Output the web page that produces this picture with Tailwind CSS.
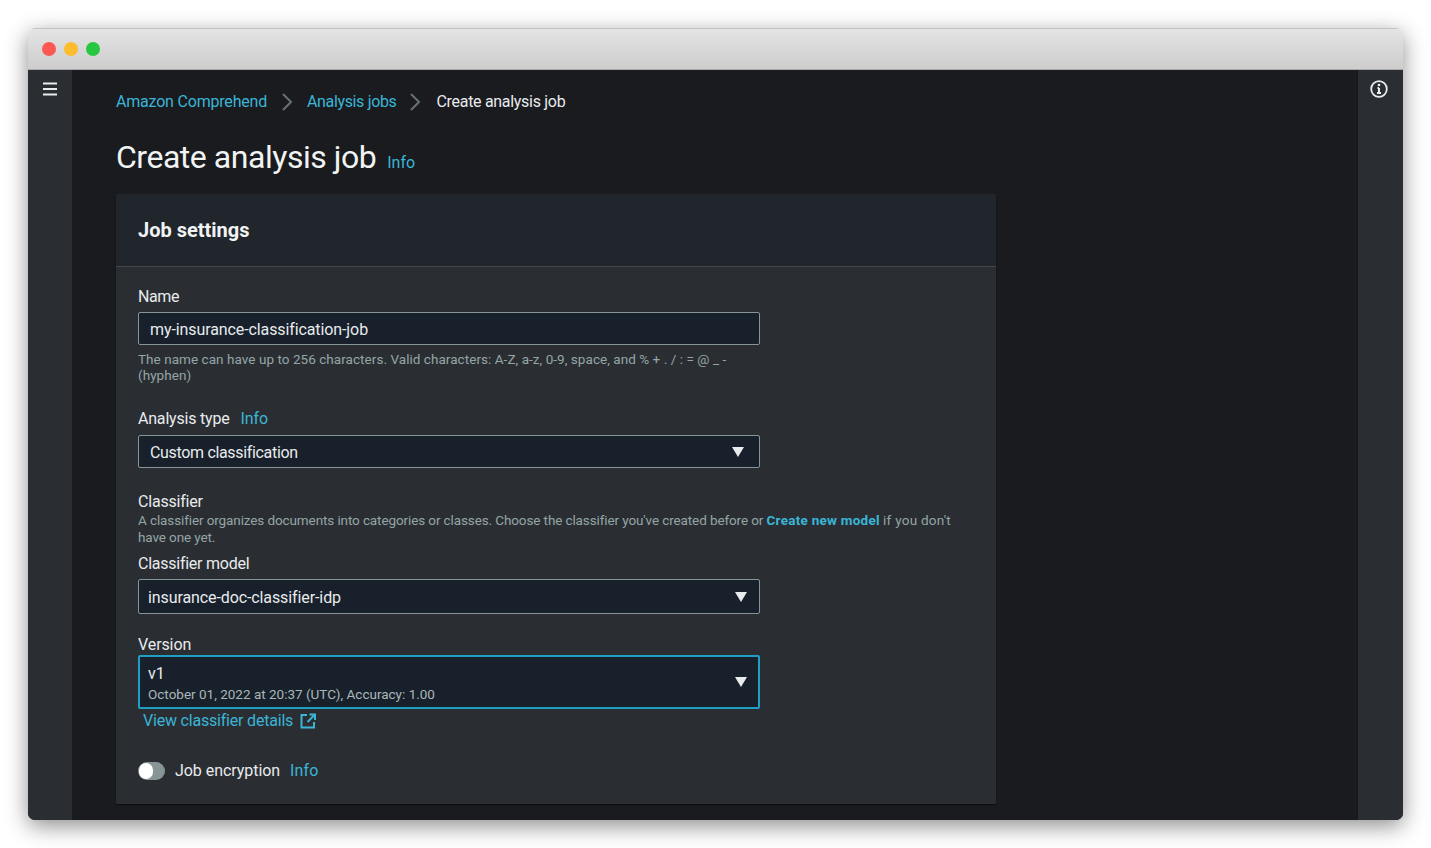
<!DOCTYPE html>
<html lang="en">

<head>
  <meta charset="UTF-8" />
  <title>Create analysis job</title>
  <script src="https://cdn.jsdelivr.net/npm/@tailwindcss/browser@4"></script>
</head>

<body class="bg-white font-['Roboto',sans-serif] h-[848px] overflow-hidden pt-[28px] pl-[28px]">
  <div class="w-[1375px] h-[792px] rounded-[7px] overflow-hidden flex flex-col shadow-[0_6px_22px_rgba(0,0,0,0.45)]">
    <!-- title bar -->
    <div class="h-[42px] shrink-0 bg-gradient-to-b from-[#e4e4e4] to-[#cdcdcd] border-t border-[#c4c4c4] border-b-[#a9a9a9] border-b flex items-center gap-[8px] pl-[14px]">
      <span class="w-[14px] h-[14px] rounded-full bg-[#fc5753]"></span>
      <span class="w-[14px] h-[14px] rounded-full bg-[#fdbc2e]"></span>
      <span class="w-[14px] h-[14px] rounded-full bg-[#27c83f]"></span>
    </div>

    <div class="flex-1 flex min-h-0 bg-[#191b1f]">
      <!-- left rail -->
      <aside class="w-[44px] shrink-0 bg-[#2a2e33] flex justify-center pt-[12px]">
        <svg class="w-[16px] h-[14px]" viewBox="0 0 16 14" fill="none" stroke="#e9ebed" stroke-width="2">
          <path d="M1 1.500h14M1 7h14M1 12.500h14" />
        </svg>
      </aside>

      <main class="flex-1 pl-[44px] pt-[21px] min-w-0">
        <nav class="flex items-center text-[16px] leading-[22px] tracking-[-0.2px] text-[#3bb5d6]">
          <a>Amazon Comprehend</a>
          <svg class="w-[12px] h-[18px] mx-[14px]" viewBox="0 0 12 18" fill="none" stroke="#687078" stroke-width="2">
            <path d="M2 1l8 8-8 8" />
          </svg>
          <a class="tracking-[-0.35px]">Analysis jobs</a>
          <svg class="w-[12px] h-[18px] ml-[13px] mr-[15px]" viewBox="0 0 12 18" fill="none" stroke="#687078" stroke-width="2">
            <path d="M2 1l8 8-8 8" />
          </svg>
          <span class="tracking-[-0.3px] text-[#e9ebed]">Create analysis job</span>
        </nav>

        <div class="flex items-baseline mt-[23px] h-[42px]">
          <h1 class="text-[32px] leading-[42px] tracking-[-0.47px] text-[#f2f3f3]">Create analysis job</h1>
          <a class="ml-[11px] text-[16px] text-[#3bb5d6]">Info</a>
        </div>

        <section class="mt-[16px] w-[880px] h-[610px] bg-[#2a2e33] shadow-[0_1px_1px_rgba(0,0,0,0.5)]">
          <div class="h-[73px] bg-[#21252c] border-b border-[#414750] px-[22px] flex items-center">
            <h2 class="text-[20px] font-bold text-[#f2f3f3]">Job settings</h2>
          </div>

          <div class="px-[22px] pt-[19px]">
            <label class="block text-[16px] leading-[22px] tracking-[-0.4px] text-[#e9ebed]">Name</label>
            <div class="mt-[4px] w-[622px] h-[33px] bg-[#17202b] border border-[#879596] rounded-[2px] flex items-center pl-[11px] text-[16px] tracking-[-0.1px] text-[#e9ebed]">
              <span class="translate-y-[1px]">my-insurance-classification-job</span>
            </div>
            <p class="mt-[6px] w-[622px] text-[13.500px] leading-[16px] tracking-[0.05px] text-[#95a5a6]">The name can have up to 256 characters. Valid characters: A-Z, a-z, 0-9, space, and % + . / : = @ _ - (hyphen)</p>

            <div class="mt-[25px] flex text-[16px] leading-[22px] text-[#e9ebed]">
              <label class="tracking-[-0.2px]">Analysis type</label>
              <a class="ml-[11px] tracking-[-0.1px] text-[#3bb5d6]">Info</a>
            </div>
            <div class="mt-[5px] w-[622px] h-[33px] bg-[#17202b] border border-[#879596] rounded-[2px] flex items-center justify-between pl-[11px] pr-[15px] text-[16px] text-[#e9ebed]">
              <span class="tracking-[-0.33px] translate-y-[1px]">Custom classification</span>
              <svg class="w-[12px] h-[10px]" viewBox="0 0 12 10" fill="#e9ebed"><path d="M0 0h12L6 10z" /></svg>
            </div>

            <label class="block mt-[23px] text-[16px] leading-[22px] tracking-[-0.2px] text-[#e9ebed]">Classifier</label>
            <p class="-mt-[1px] text-[13.500px] leading-[17px] tracking-[-0.11px] text-[#95a5a6]">A classifier organizes documents into categories or classes. Choose the classifier you've created before or <a class="font-bold tracking-[0.25px] text-[#3bb5d6]">Create new model</a> <span class="tracking-[0.25px]">if you don't</span> have one yet.</p>

            <label class="block mt-[7px] text-[16px] leading-[22px] tracking-[-0.25px] text-[#e9ebed]">Classifier model</label>
            <div class="mt-[4px] w-[622px] h-[35px] bg-[#17202b] border border-[#879596] rounded-[2px] flex items-center justify-between pl-[9px] pr-[12px] text-[16px] text-[#e9ebed]">
              <span class="tracking-[-0.1px] translate-y-[1px]">insurance-doc-classifier-idp</span>
              <svg class="w-[12px] h-[10px]" viewBox="0 0 12 10" fill="#e9ebed"><path d="M0 0h12L6 10z" /></svg>
            </div>

            <label class="block mt-[20px] text-[16px] leading-[22px] tracking-[-0.1px] text-[#e9ebed]">Version</label>
            <div class="-mt-[1px] w-[622px] h-[54px] bg-[#17202b] border-2 border-[#1f9fc4] rounded-[2px] flex items-center justify-between pl-[8px] pr-[11px]">
              <div class="pt-[2px]">
                <div class="text-[16px] leading-[22px] text-[#e9ebed]">v1</div>
                <div class="text-[13.500px] leading-[18px] text-[#aab7b8]">October 01, 2022 at 20:37 (UTC), Accuracy: 1.00</div>
              </div>
              <svg class="w-[12px] h-[10px]" viewBox="0 0 12 10" fill="#e9ebed"><path d="M0 0h12L6 10z" /></svg>
            </div>
            <a class="mt-[1px] ml-[5px] flex items-center text-[16px] leading-[22px] tracking-[-0.2px] text-[#3bb5d6]">
              View classifier details
              <svg class="ml-[7px] w-[16px] h-[16px]" viewBox="0 0 16 16" fill="none" stroke="#3bb5d6" stroke-width="2">
                <path d="M7 2H1.500v12.500h12.500V9M9.500 1.500H15V7M15 1.500L7.500 9" />
              </svg>
            </a>

            <div class="mt-[28px] flex items-center text-[16px] leading-[22px] text-[#e9ebed]">
              <span class="w-[27px] h-[18px] rounded-full bg-[#879596] flex items-center pl-[1px]">
                <span class="w-[14px] h-[16px] rounded-full bg-white"></span>
              </span>
              <span class="ml-[10px] tracking-[-0.05px]">Job encryption</span>
              <a class="ml-[10px] tracking-[0.1px] text-[#3bb5d6]">Info</a>
            </div>
          </div>
        </section>
      </main>

      <!-- right rail -->
      <aside class="w-[46px] shrink-0 bg-[#2a2e33] border-l border-[#14171a] flex justify-center pt-[10px] pr-[4px]">
        <svg class="w-[18px] h-[18px]" viewBox="0 0 18 18" fill="none" stroke="#e9ebed">
          <circle cx="9" cy="9" r="7.800" stroke-width="1.800" />
          <path d="M9 8v5M7 13h4M7.500 8H9" stroke-width="2" />
          <circle cx="9" cy="5" r="1.300" fill="#e9ebed" stroke="none" />
        </svg>
      </aside>
    </div>
  </div>
</body>

</html>
